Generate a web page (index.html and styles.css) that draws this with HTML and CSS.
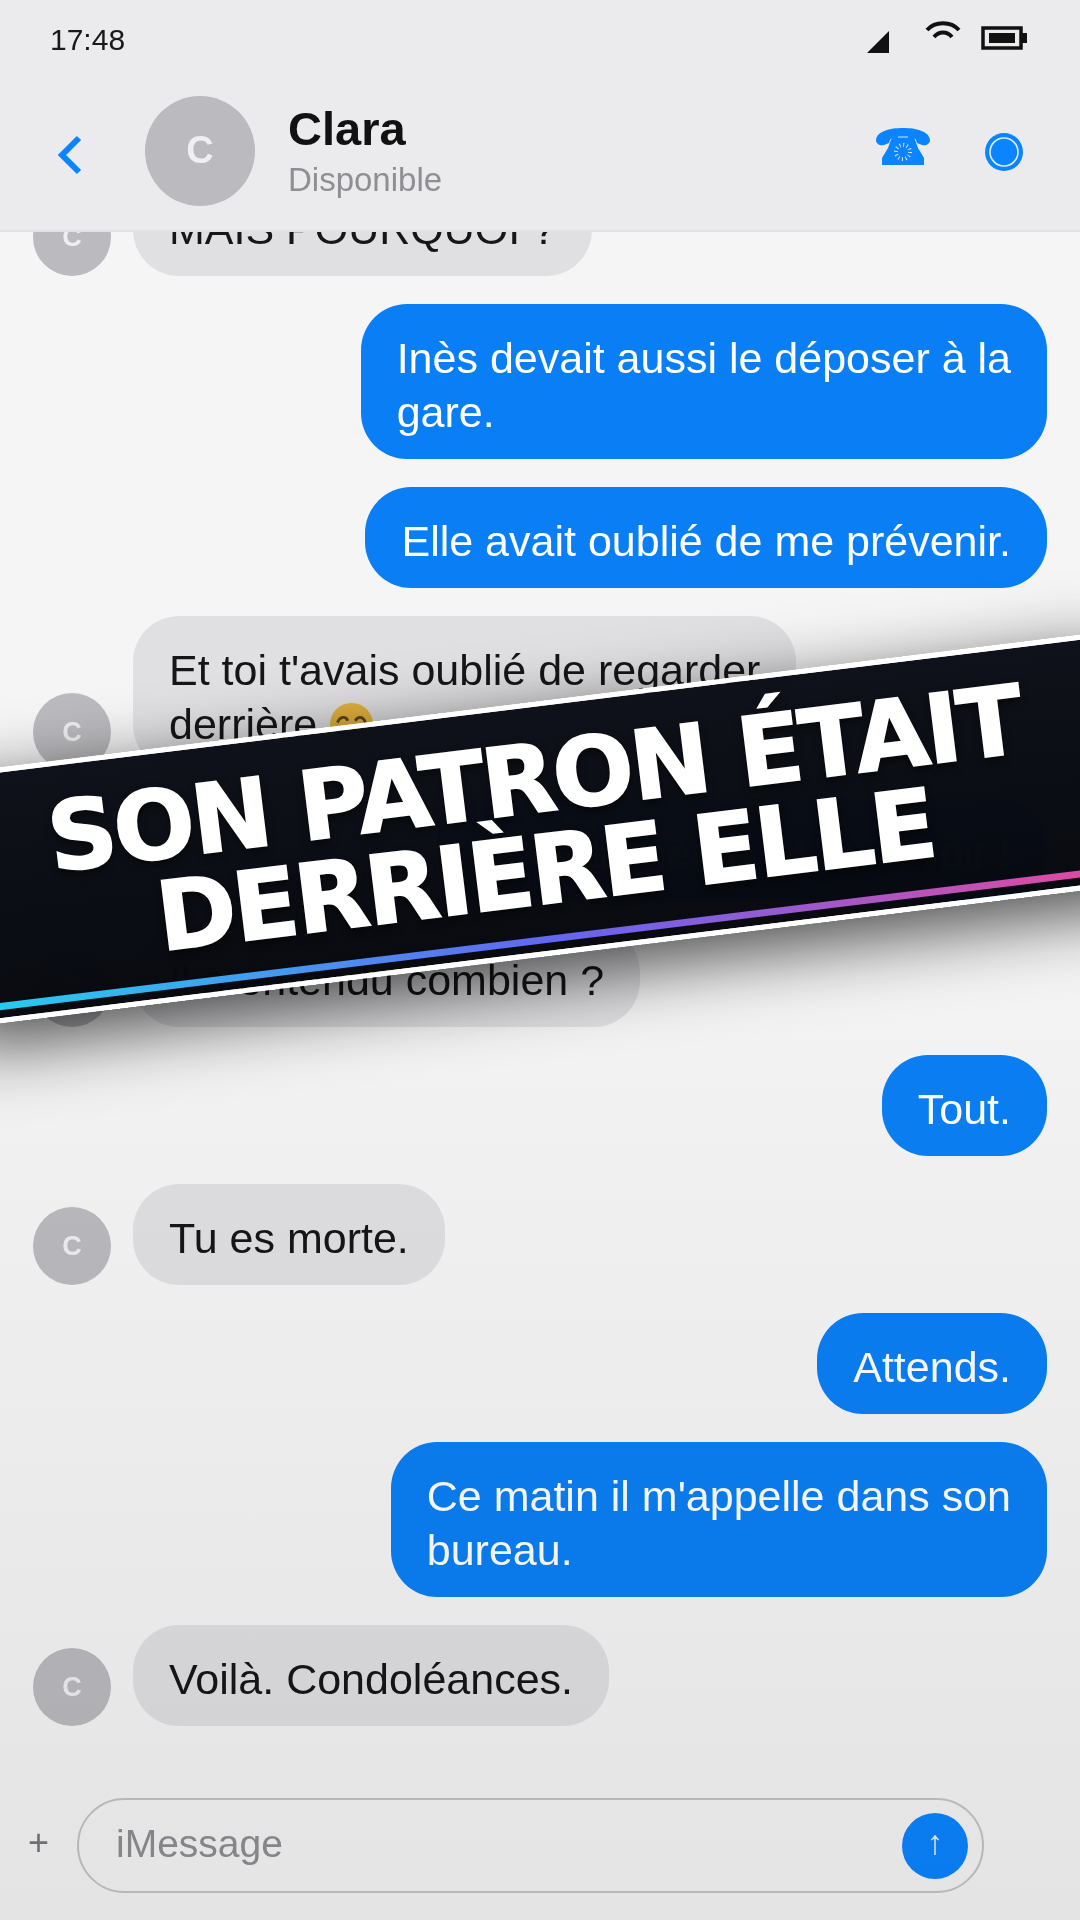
FILE: index.html
```html
<!DOCTYPE html>
<html lang="fr">
<head>
  <meta charset="UTF-8">
  <title>Clara</title>
  <link rel="stylesheet" href="styles.css">
</head>
<body>
  <div class="screen">
    <div class="chat">
      <div class="top">
        <div class="status">
          <span class="time">17:48</span>
          <div class="status-icons">
            <svg class="ic-signal" width="24" height="24" viewBox="0 0 24 24"><path d="M23 1V23H1Z" fill="#111"/></svg>
            <svg class="ic-wifi" width="36" height="24" viewBox="0 0 36 24"><path d="M2 11C10 2 26 2 34 11M9 18C14 12 22 12 27 18" fill="none" stroke="#111" stroke-width="4"/></svg>
            <svg class="ic-batt" width="46" height="24" viewBox="0 0 46 24"><rect x="2" y="2" width="38" height="20" fill="none" stroke="#111" stroke-width="3.5"/><rect x="8" y="7" width="26" height="10" fill="#111"/><rect x="41" y="7" width="5" height="10" fill="#111"/></svg>
          </div>
        </div>
        <div class="nav">
          <svg class="back" width="26" height="40" viewBox="0 0 26 40"><path d="M22 3L5 20L22 37" fill="none" stroke="#0a84ff" stroke-width="6"/></svg>
          <div class="avatar avatar-big">C</div>
          <div class="who">
            <div class="name">Clara</div>
            <div class="state">Disponible</div>
          </div>
          <div class="nav-actions">
            <svg class="phone" width="54" height="37" viewBox="0 0 54 37">
              <path d="M0 12C1 3 14 0 27 0C40 0 53 3 54 12C54 16 50 18 46 17L41 15C40 12 40 11 38 10H16C14 11 14 12 13 15L8 17C4 18 0 16 0 12Z" fill="#0a84ff"/>
              <path d="M16 9H38L42 20L48 30V37H6V30L12 20Z" fill="#0a84ff"/>
              <path d="M22 9H32" stroke="#cfe4ff" stroke-width="1"/>
              <circle cx="27" cy="24" r="7" fill="none" stroke="#cfe4ff" stroke-width="4" stroke-dasharray="1 2.66"/>
            </svg>
            <svg class="record" width="38" height="38" viewBox="0 0 38 38">
              <circle cx="19" cy="19" r="19" fill="#0a84ff"/>
              <circle cx="19" cy="19" r="14" fill="none" stroke="#e4effb" stroke-width="1.6"/>
            </svg>
          </div>
        </div>
      </div>

      <div class="messages">
        <div class="row them"><div class="avatar">C</div><div class="bubble">MAIS POURQUOI ?</div></div>
        <div class="row me"><div class="bubble">Inès devait aussi le déposer à la<br>gare.</div></div>
        <div class="row me"><div class="bubble">Elle avait oublié de me prévenir.</div></div>
        <div class="row them"><div class="avatar">C</div><div class="bubble">Et toi t'avais oublié de regarder<br>derrière <svg class="emoji" width="45" height="45" viewBox="0 0 48 48"><circle cx="24" cy="24" r="23" fill="#e6b53e"/><path d="M9 22C12 15 18 15 20 20M28 20C31 15 36 15 39 22" fill="none" stroke="#5b4618" stroke-width="3"/><path d="M10 28C18 32 30 32 38 28C36 40 12 40 10 28Z" fill="#5b4618"/></svg></div></div>
        <div class="row me"><div class="bubble">Je lui ai même dit au revoir !</div></div>
        <div class="row them tight"><div class="avatar">C</div><div class="bubble">Il a entendu combien ?</div></div>
        <div class="row me"><div class="bubble">Tout.</div></div>
        <div class="row them"><div class="avatar">C</div><div class="bubble">Tu es morte.</div></div>
        <div class="row me"><div class="bubble">Attends.</div></div>
        <div class="row me"><div class="bubble">Ce matin il m'appelle dans son<br>bureau.</div></div>
        <div class="row them"><div class="avatar">C</div><div class="bubble">Voilà. Condoléances.</div></div>
      </div>

      <div class="composer">
        <span class="plus">+</span>
        <div class="field">
          <span class="placeholder">iMessage</span>
          <span class="send">↑</span>
        </div>
      </div>
      <div class="shade"></div>
    </div>

    <div class="banner">
      <div class="banner-text">SON PATRON ÉTAIT<br>DERRIÈRE ELLE</div>
      <div class="banner-line"></div>
    </div>
  </div>
</body>
</html>
```

FILE: styles.css
```css
* {
  box-sizing: border-box;
}
body {
  margin: 0;
  font-family: "Liberation Sans", Arial, sans-serif;
  background: #f5f5f6;
}
.screen {
  position: relative;
  width: 1080px;
  height: 1920px;
  overflow: hidden;
}
.chat {
  position: relative;
  height: 100%;
  display: flex;
  flex-direction: column;
  background: #f5f5f6;
  filter: blur(0.7px);
}
.shade {
  position: absolute;
  inset: 0;
  background: linear-gradient(rgba(0,0,0,0) 45%, rgba(0,0,0,0.07) 100%);
  pointer-events: none;
}

/* top bar */
.top {
  height: 232px;
  flex: none;
  background: #ebebee;
  border-bottom: 2px solid #e2e2e5;
  position: relative;
  z-index: 1;
}
.status {
  height: 80px;
  padding: 0 50px;
  display: flex;
  align-items: center;
  justify-content: space-between;
}
.time {
  font-size: 30px;
  color: #1a1a1c;
}
.status-icons {
  display: flex;
  align-items: flex-start;
  gap: 35px;
  margin-right: 3px;
}
.ic-signal { margin-top: 3px; margin-right: -2px; }
.ic-wifi { margin-top: -8px; margin-left: 2px; margin-right: -15px; }
.ic-batt { margin-top: -1px; }
.nav {
  display: flex;
  align-items: center;
  padding-left: 57px;
  height: 110px;
  margin-top: 16px;
}
.back {
  margin-top: 8px;
}
.avatar {
  width: 78px;
  height: 78px;
  flex: none;
  border-radius: 50%;
  background: #bbbbbf;
  color: #efeff1;
  font-size: 27px;
  font-weight: bold;
  display: flex;
  align-items: center;
  justify-content: center;
}
.avatar-big {
  width: 110px;
  height: 110px;
  margin-left: 62px;
  font-size: 38px;
  padding-bottom: 2px;
}
.who {
  margin-left: 33px;
}
.name {
  font-size: 47px;
  font-weight: bold;
  color: #111;
  line-height: 52px;
}
.state {
  font-size: 33px;
  color: #8e8e93;
  line-height: 38px;
  margin-top: 6px;
}
.nav-actions {
  margin-left: auto;
  display: flex;
  align-items: center;
  gap: 55px;
  padding-right: 57px;
}
.phone {
  margin-bottom: 9px;
}
.record {
  margin-top: 2px;
}

/* messages */
.messages {
  flex: 1;
  min-height: 0;
  overflow: hidden;
  display: flex;
  flex-direction: column;
  justify-content: flex-end;
  gap: 28px;
  padding: 0 33px 44px;
}
.row {
  display: flex;
  flex: none;
  align-items: flex-end;
}
.row.me {
  justify-content: flex-end;
}
.row.them {
  gap: 22px;
}
.row.tight {
  margin-top: -2px;
}
.bubble {
  padding: 27px 36px 20px;
  font-size: 43px;
  line-height: 54px;
  border-radius: 46px;
}
.me .bubble {
  background: #0a7ff5;
  color: #fff;
}
.them .bubble {
  background: #e0e0e3;
  color: #161618;
}
.emoji {
  vertical-align: -8px;
}

/* bottom input */
.composer {
  flex: none;
  height: 150px;
  padding: 28px 96px 27px 28px;
  display: flex;
  align-items: center;
}
.plus {
  width: 49px;
  font-size: 36px;
  color: #77777c;
  flex: none;
  margin-top: -6px;
}
.field {
  flex: 1;
  height: 95px;
  border: 2.5px solid #c4c4c8;
  border-radius: 48px;
  padding: 0 14px 0 37px;
  display: flex;
  align-items: center;
  justify-content: space-between;
}
.placeholder {
  font-size: 39px;
  color: #8e8e93;
  margin-top: -4px;
}
.send {
  width: 66px;
  height: 66px;
  border-radius: 50%;
  background: #0a84ff;
  color: #f2f2f2;
  font-size: 34px;
  padding-bottom: 6px;
  display: flex;
  align-items: center;
  justify-content: center;
}

/* overlay title */
.banner {
  position: absolute;
  left: -60px;
  top: 702px;
  width: 1200px;
  height: 254px;
  transform: rotate(-7deg);
  background: linear-gradient(rgba(12,15,23,0.988), rgba(6,8,14,0.988));
  border-top: 5px solid #fff;
  border-bottom: 5px solid #fff;
  box-shadow: 0 20px 70px rgba(0,0,0,0.7);
  display: flex;
  flex-direction: column;
  justify-content: center;
  padding-bottom: 8px;
}
.banner-text {
  font-family: "DejaVu Sans", sans-serif;
  font-weight: bold;
  font-size: 96px;
  line-height: 92px;
  letter-spacing: -3px;
  color: #fff;
  text-align: center;
  -webkit-text-stroke: 1.5px #fff;
  text-shadow: 0 4px 8px rgba(0,0,0,0.6);
}
.banner-line {
  position: absolute;
  left: 0;
  right: 0;
  bottom: 8px;
  height: 7px;
  background: linear-gradient(90deg, #22d3ee, #6366f1, #ec4899);
}
```
